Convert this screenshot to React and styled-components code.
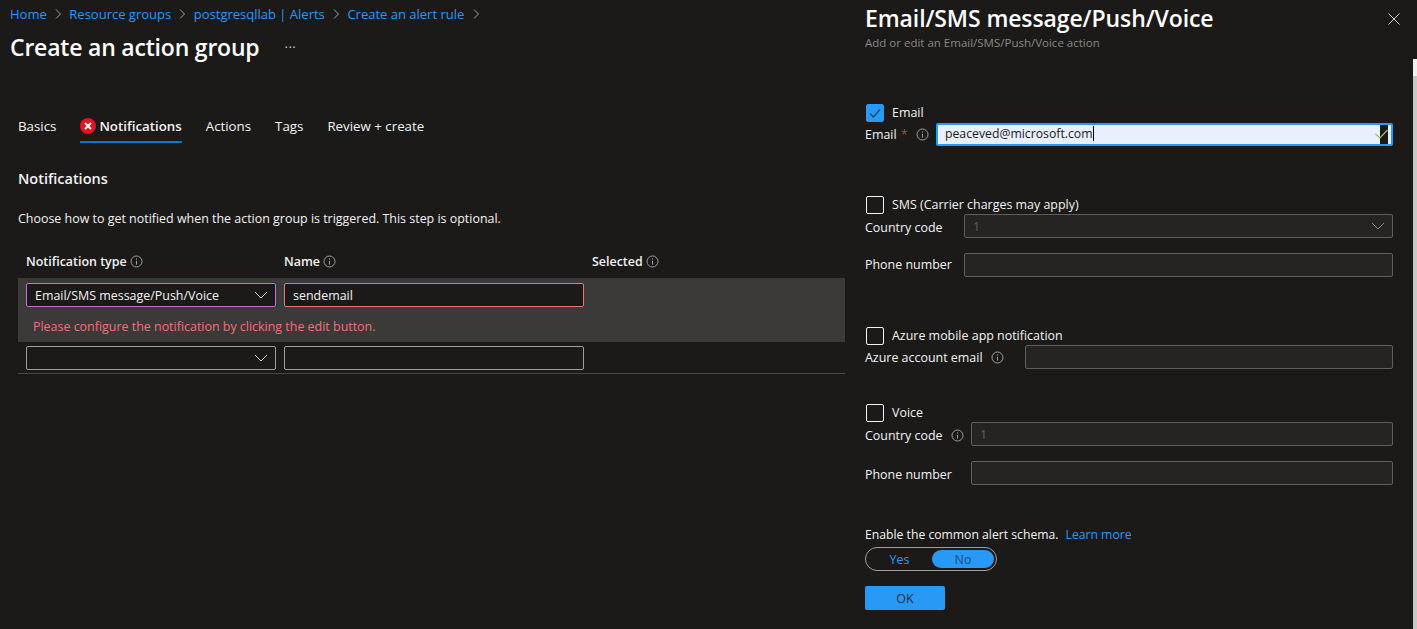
import React from "react";
import styled, { createGlobalStyle } from "styled-components";

const GlobalStyle = createGlobalStyle`
  html, body {
    margin: 0;
    padding: 0;
    height: 100%;
    background: #1b1a19;
    overflow: hidden;
  }
  body {
    font-family: "Open Sans", "Liberation Sans", sans-serif;
    font-size: 12.45px;
    color: #f3f2f1;
  }
`;

const Page = styled.div`
  display: flex;
  width: 1417px;
  height: 629px;
  overflow: hidden;
`;

const Main = styled.main`
  width: 845px;
  flex: none;
  padding: 5px 0 0 0;
  box-sizing: border-box;
`;

const Crumbs = styled.nav`
  display: flex;
  align-items: center;
  height: 17px;
  padding-left: 10px;
  gap: 6.3px;
  font-size: 13px;
`;

const Crumb = styled.a`
  color: #2899f5;
`;

const Sep = styled.svg`
  width: 10px;
  height: 10px;
  fill: none;
  stroke: #a19f9d;
  stroke-width: 1;
`;

const TitleRow = styled.div`
  display: flex;
  align-items: center;
  padding: 8px 0 0 10px;
  height: 33px;
`;

const Title = styled.h1`
  margin: 0;
  font-size: 23px;
  font-weight: 600;
  color: #fff;
  letter-spacing: -0.2px;
`;

const More = styled.span`
  margin-left: 25px;
  padding-top: 2px;
  color: #c8c6c4;
  font-size: 13px;
  letter-spacing: 0.5px;
  line-height: 1;
`;

const Tabs = styled.div`
  display: flex;
  margin: 45px 0 0 18px;
  height: 35px;
  gap: 24px;
  font-size: 13.3px;
`;

const Tab = styled.div`
  display: flex;
  align-items: center;
  gap: 3px;
  height: 35px;
  box-sizing: border-box;
  padding-top: 3px;
  font-weight: ${(p) => (p.$active ? 600 : 400)};
  border-bottom: 2px solid ${(p) => (p.$active ? "#0078d4" : "transparent")};
  color: #f3f2f1;
`;

const ErrorIcon = styled.svg`
  width: 16px;
  height: 16px;
`;

const SectionTitle = styled.h2`
  margin: 0;
  padding: 26px 0 0 18px;
  font-size: 14.5px;
  font-weight: 600;
  line-height: 20px;
`;

const Description = styled.p`
  margin: 0;
  padding: 20px 0 0 18px;
  line-height: 20px;
`;

const TableHead = styled.div`
  display: grid;
  grid-template-columns: 258px 308px 1fr;
  padding: 24px 0 0 26px;
  height: 17px;
  align-items: center;
  font-weight: 600;
`;

const HeadCell = styled.div`
  display: flex;
  align-items: center;
  gap: 3px;
`;

const Info = styled.svg`
  width: 13px;
  height: 13px;
  flex: none;
  fill: none;
  stroke: #a19f9d;
  margin-left: ${(p) => p.$left || 0}px;
`;

const Rows = styled.div`
  margin: 8px 0 0 18px;
`;

const Row = styled.div`
  padding: ${(p) => p.$pad}px 0 0 8px;
  height: ${(p) => p.$height}px;
  box-sizing: border-box;
  background: ${(p) => (p.$highlight ? "#3b3a39" : "transparent")};
  border-bottom: ${(p) => (p.$line ? "1px solid #484644" : "none")};
`;

const RowFields = styled.div`
  display: grid;
  grid-template-columns: 250px 300px;
  gap: 8px;
`;

const Field = styled.div`
  display: flex;
  align-items: center;
  justify-content: space-between;
  height: 24px;
  box-sizing: border-box;
  padding: 0 8px;
  border: 1px solid ${(p) => p.$border || "#a19f9d"};
  border-radius: 2px;
  background: ${(p) => p.$bg || "#1b1a19"};
  color: ${(p) => p.$color || "#f3f2f1"};
  white-space: nowrap;
`;

const Chevron = styled.svg`
  width: 14px;
  height: 10px;
  fill: none;
  stroke: ${(p) => p.$color || "#d2d0ce"};
  stroke-width: 1;
  margin-right: -1px;
`;

const ErrorText = styled.div`
  padding: 11px 0 0 7px;
  line-height: 17px;
  color: #f1707b;
`;

const Panel = styled.aside`
  position: relative;
  width: 572px;
  flex: none;
  padding: 0 24px 0 20px;
  box-sizing: border-box;
`;

const PanelTitle = styled.h2`
  margin: 0;
  padding-top: 3px;
  font-size: 23px;
  line-height: 30px;
  font-weight: 600;
  letter-spacing: -0.1px;
  color: #fff;
`;

const PanelSub = styled.div`
  margin-top: 2px;
  font-size: 11.5px;
  line-height: 15px;
  color: #8a8886;
`;

const Close = styled.svg`
  position: absolute;
  right: 17px;
  top: 13px;
  width: 12px;
  height: 12px;
  stroke: #d2d0ce;
  stroke-width: 1;
`;

const ScrollTrack = styled.div`
  position: absolute;
  right: 0;
  top: 59px;
  width: 4px;
  bottom: 0;
  background: #c8c8c8;
  border-top: 17px solid #f1f1f1;
  box-sizing: border-box;
`;

const Section = styled.section`
  margin-top: ${(p) => p.$top}px;
`;

const CheckRow = styled.label`
  display: flex;
  align-items: flex-start;
  height: 18px;
  padding-left: 1px;
  gap: 8px;
  line-height: 17px;
`;

const Box = styled.span`
  display: flex;
  align-items: center;
  justify-content: center;
  width: 18px;
  height: 18px;
  box-sizing: border-box;
  border-radius: 2px;
  border: 1px solid ${(p) => (p.$checked ? "#2899f5" : "#f3f2f1")};
  background: ${(p) => (p.$checked ? "#2899f5" : "transparent")};
  svg {
    width: 12px;
    height: 12px;
    fill: none;
    stroke: #1b3f66;
    stroke-width: 1.2;
  }
`;

const FormRow = styled.div`
  display: grid;
  grid-template-columns: ${(p) => p.$label}px 1fr;
  align-items: center;
  margin-top: ${(p) => p.$top || 0}px;
  height: ${(p) => p.$height || 24}px;
`;

const FormLabel = styled.div`
  display: flex;
  align-items: center;
  padding: ${(p) => p.$top ?? 1}px 0 ${(p) => p.$bottom ?? 0}px;
  white-space: nowrap;
`;

const Required = styled.span`
  color: #d13438;
  margin-left: 4px;
`;

const EmailBox = styled.div`
  position: relative;
  display: flex;
  align-items: center;
  height: 23px;
  box-sizing: border-box;
  padding: 0 7px 2px;
  font-size: 12.25px;
  background: #e8f0fe;
  color: #1b1a19;
  border: 2px solid #2899f5;
  border-radius: 2px;
`;

const Caret = styled.span`
  width: 1px;
  height: 15px;
  background: #000;
`;

const ValidSlot = styled.span`
  position: absolute;
  top: 0;
  bottom: 0;
  right: 3px;
  width: 8px;
  background: #1b1a19;
`;

const ValidIcon = styled.svg`
  position: absolute;
  right: 2px;
  top: 3px;
  width: 14px;
  height: 14px;
  fill: none;
  stroke: #92c353;
  stroke-width: 1.2;
`;

const SchemaLine = styled.div`
  display: flex;
  gap: 7px;
  font-size: 12.2px;
  line-height: 17px;
`;

const LearnMore = styled.a`
  color: #2899f5;
`;

const Toggle = styled.div`
  display: grid;
  grid-template-columns: 1fr 1fr;
  width: 132px;
  height: 24px;
  margin-top: 4px;
  padding: 2px;
  box-sizing: border-box;
  border: 1px solid #a19f9d;
  border-radius: 12px;
`;

const ToggleOption = styled.div`
  display: flex;
  align-items: center;
  justify-content: center;
  border-radius: 9px;
  background: ${(p) => (p.$on ? "#2899f5" : "transparent")};
  color: ${(p) => (p.$on ? "#1e4f80" : "#2899f5")};
  margin-left: ${(p) => (p.$on ? 1 : 0)}px;
`;

const OkButton = styled.button`
  display: block;
  width: 80px;
  height: 24px;
  margin-top: 15px;
  padding: 0;
  border: none;
  border-radius: 2px;
  background: #2899f5;
  color: #1b2a3a;
  font: inherit;
`;

const ChevronRight = () => (
  <Sep viewBox="0 0 10 10">
    <path d="M3 0.5 L7.5 5 L3 9.5" />
  </Sep>
);

const InfoIcon = ({ left }) => (
  <Info viewBox="0 0 13 13" $left={left}>
    <circle cx="6.5" cy="6.5" r="5.5" />
    <path d="M6.5 5.8 V9.6 M6.5 3.4 V4.6" />
  </Info>
);

const ChevronDown = ({ color }) => (
  <Chevron viewBox="0 0 14 10" $color={color}>
    <path d="M1 2 L7 8 L13 2" />
  </Chevron>
);

export default function App() {
  return (
    <Page>
      <GlobalStyle />
      <Main>
        <Crumbs>
          <Crumb>Home</Crumb>
          <ChevronRight />
          <Crumb>Resource groups</Crumb>
          <ChevronRight />
          <Crumb>postgresqllab | Alerts</Crumb>
          <ChevronRight />
          <Crumb>Create an alert rule</Crumb>
          <ChevronRight />
        </Crumbs>
        <TitleRow>
          <Title>Create an action group</Title>
          <More>···</More>
        </TitleRow>
        <Tabs>
          <Tab>Basics</Tab>
          <Tab $active>
            <ErrorIcon viewBox="0 0 16 16">
              <circle cx="8" cy="8" r="8" fill="#e81123" />
              <path d="M5 5 L11 11 M11 5 L5 11" stroke="#fff" strokeWidth="2" />
            </ErrorIcon>
            Notifications
          </Tab>
          <Tab>Actions</Tab>
          <Tab>Tags</Tab>
          <Tab>Review + create</Tab>
        </Tabs>
        <SectionTitle>Notifications</SectionTitle>
        <Description>
          Choose how to get notified when the action group is triggered. This step is optional.
        </Description>
        <TableHead>
          <HeadCell>
            Notification type <InfoIcon />
          </HeadCell>
          <HeadCell>
            Name <InfoIcon />
          </HeadCell>
          <HeadCell>
            Selected <InfoIcon />
          </HeadCell>
        </TableHead>
        <Rows>
          <Row $highlight $height={64} $pad={5}>
            <RowFields>
              <Field $border="#c86dd7">
                Email/SMS message/Push/Voice
                <ChevronDown />
              </Field>
              <Field $border="#f1707b">sendemail</Field>
            </RowFields>
            <ErrorText>Please configure the notification by clicking the edit button.</ErrorText>
          </Row>
          <Row $height={32} $pad={4} $line>
            <RowFields>
              <Field>
                <span />
                <ChevronDown />
              </Field>
              <Field />
            </RowFields>
          </Row>
        </Rows>
      </Main>
      <Panel>
        <PanelTitle>Email/SMS message/Push/Voice</PanelTitle>
        <PanelSub>Add or edit an Email/SMS/Push/Voice action</PanelSub>
        <Close viewBox="0 0 12 12">
          <path d="M0.5 0.5 L11.5 11.5 M11.5 0.5 L0.5 11.5" />
        </Close>
        <ScrollTrack />

        <Section $top={54}>
          <CheckRow>
            <Box $checked>
              <svg viewBox="0 0 12 12">
                <path d="M1 6.5 L4.5 10 L11 2.5" />
              </svg>
            </Box>
            Email
          </CheckRow>
          <FormRow $label={71} $top={1} $height={23}>
            <FormLabel $top={0} $bottom={1}>
              Email<Required>*</Required>
              <InfoIcon left={9} />
            </FormLabel>
            <EmailBox>
              peaceved@microsoft.com
              <Caret />
              <ValidSlot />
              <ValidIcon viewBox="0 0 14 14">
                <path d="M0.5 6 L5 10 L12.5 2" />
              </ValidIcon>
            </EmailBox>
          </FormRow>
        </Section>

        <Section $top={50}>
          <CheckRow>
            <Box />
            SMS (Carrier charges may apply)
          </CheckRow>
          <FormRow $label={99}>
            <FormLabel $top={3}>Country code</FormLabel>
            <Field $bg="#252423" $border="#605e5c" $color="#605e5c">
              1
              <ChevronDown color="#8a8886" />
            </Field>
          </FormRow>
          <FormRow $label={99} $top={15}>
            <FormLabel $top={0} $bottom={1}>Phone number</FormLabel>
            <Field $bg="#252423" $border="#605e5c" />
          </FormRow>
        </Section>

        <Section $top={50}>
          <CheckRow>
            <Box />
            Azure mobile app notification
          </CheckRow>
          <FormRow $label={160}>
            <FormLabel>
              Azure account email
              <InfoIcon left={8} />
            </FormLabel>
            <Field $bg="#252423" $border="#605e5c" />
          </FormRow>
        </Section>

        <Section $top={35}>
          <CheckRow>
            <Box />
            Voice
          </CheckRow>
          <FormRow $label={106}>
            <FormLabel $top={3}>
              Country code
              <InfoIcon left={8} />
            </FormLabel>
            <Field $bg="#252423" $border="#605e5c" $color="#605e5c">
              1
            </Field>
          </FormRow>
          <FormRow $label={106} $top={15}>
            <FormLabel $top={3}>Phone number</FormLabel>
            <Field $bg="#252423" $border="#605e5c" />
          </FormRow>
        </Section>

        <Section $top={41}>
          <SchemaLine>
            Enable the common alert schema.
            <LearnMore>Learn more</LearnMore>
          </SchemaLine>
          <Toggle>
            <ToggleOption>Yes</ToggleOption>
            <ToggleOption $on>No</ToggleOption>
          </Toggle>
          <OkButton>OK</OkButton>
        </Section>
      </Panel>
    </Page>
  );
}
